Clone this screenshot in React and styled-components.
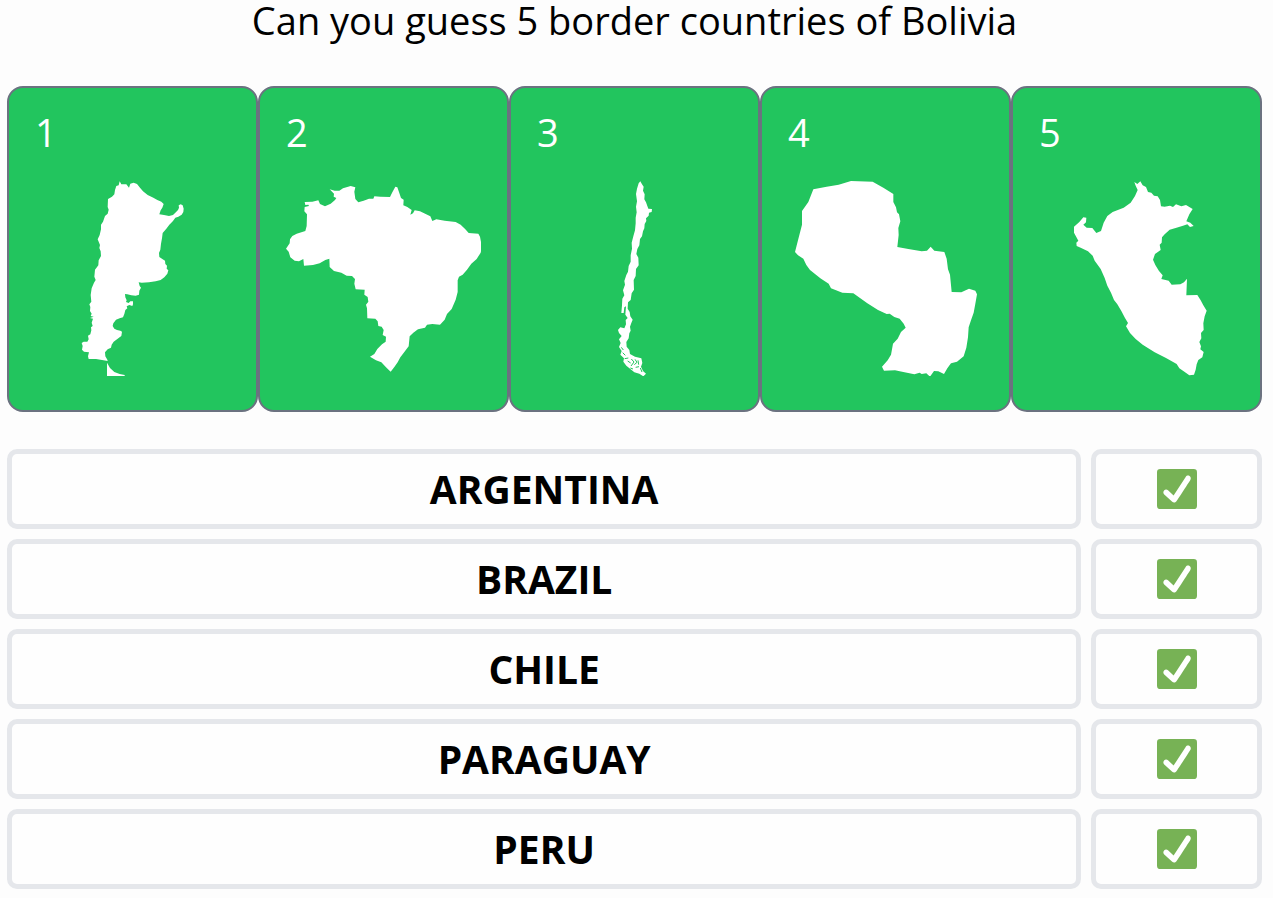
import React from 'react'
import styled, { createGlobalStyle } from 'styled-components'

const countries = [
    {
        name: 'ARGENTINA',
        viewBox: '105 303 585 585',
        path: 'M349 318L356 316L359 304L364 313L379 313L387 323L391 311L401 308L411 312L420 323L429 334L443 345L460 353L472 360L484 365L491 372L487 383L482 391L478 403L492 405L507 408L519 405L526 398L534 390L537 383L536 376L542 373L548 376L551 386L550 396L545 404L535 410L526 413L519 423L508 434L499 446L488 459L486 475L483 491L481 509L477 519L478 531L487 537L495 542L496 552L501 557L500 566L505 571L502 581L493 592L482 600L467 604L447 607L425 608L416 607L419 618L423 623L418 632L417 644L407 647L394 646L382 643L375 642L376 652L380 661L378 666L386 669L391 664L399 664L399 673L397 678L388 675L380 679L382 685L376 690L373 702L369 712L359 715L348 719L340 730L338 738L343 746L351 750L361 752L366 755L364 768L353 776L341 785L335 794L333 803L323 808L315 817L316 829L322 839L323 843L306 840L288 837L266 837L264 829L267 817L252 815L246 809L248 798L245 789L251 785L262 785L266 778L264 767L271 763L274 751L273 742L278 738L275 728L279 716L270 714L281 710L272 708L275 701L270 693L271 681L268 673L274 665L272 645L275 625L282 608L287 600L283 590L285 569L295 556L296 541L303 528L302 514L298 504L300 495L293 478L299 465L303 448L303 434L309 425L315 408L323 401L326 389L323 381L324 357L336 350L343 343L345 330ZM321 848L330 864L343 876L359 882L374 885L374 888L347 890L321 888Z'
    },
    {
        name: 'BRAZIL',
        viewBox: '93 303 585 585',
        path: 'M149 366L172 365L190 361L195 372L210 379L227 371L240 360L244 354L236 350L237 341L224 328L239 332L253 332L264 325L287 318L301 322L298 335L301 357L310 367L326 362L342 356L355 356L358 349L376 350L405 351L412 337L421 320L427 322L434 342L438 354L446 359L445 376L457 381L470 390L466 404L474 400L479 391L495 394L512 402L526 409L532 423L544 418L569 422L602 426L617 434L631 448L641 459L670 461L675 470L681 502L677 518L665 537L649 551L636 569L623 584L612 590L608 601L608 636L602 659L590 687L576 702L569 719L555 734L532 732L516 734L510 743L489 748L475 758L464 769L461 799L448 816L436 832L428 847L418 861L407 875L396 865L379 847L363 841L345 830L358 822L367 807L381 793L392 785L393 770L383 765L386 750L380 740L370 738L368 724L361 716L337 715L336 685L333 674L340 665L338 651L328 644L329 629L302 628L298 611L300 597L291 588L275 587L259 578L237 573L224 561L223 536L211 540L194 550L174 555L147 557L145 537L132 544L119 542L106 532L101 515L93 506L104 490L105 478L112 468L125 461L151 453L155 438L156 403L148 394L149 381L162 378L160 374L151 375Z'
    },
    {
        name: 'CHILE',
        viewBox: '-189 33 585 585',
        path: 'M116 40L121 34L126 43L131 50L129 62L134 73L133 88L138 97L145 116L156 117L155 126L147 128L146 137L138 145L139 153L134 162L133 175L129 184L126 199L120 207L118 226L112 237L109 252L115 263L116 286L108 297L107 318L101 330L102 359L95 370L92 390L84 397L83 416L89 426L91 439L98 449L94 459L90 470L92 482L88 490L86 505L79 516L80 530L88 540L90 552L105 560L124 565L127 579L123 590L129 603L138 611L130 619L118 611L103 607L91 597L79 587L70 575L72 565L61 554L65 543L57 531L62 519L57 508L65 498L57 489L54 480L61 472L73 475L78 463L77 450L83 444L76 434L78 409L73 412L71 429L64 429L66 406L67 386L73 376L69 361L75 344L73 333L79 315L84 305L86 288L92 275L92 256L96 236L95 218L100 199L105 181L107 160L107 143L110 127L108 110L111 94L108 72L111 56Z',
        channels: 'M64 532L70 540M68 548L76 556M74 566L85 564M83 573L92 579M94 567L102 576L93 588M105 568L111 577L103 584M114 571L116 584M107 592L117 590M91 594L99 597M121 594L126 606'
    },
    {
        name: 'PARAGUAY',
        viewBox: '84 303 585 585',
        path: 'M160 328L200 320L236 314L273 303L338 305L370 323L400 342L400 366L408 382L411 397L417 403L421 424L415 444L416 465L412 501L445 507L485 514L501 512L512 500L523 512L553 516L560 536L564 568L570 584L575 636L604 637L627 626L646 632L651 643L646 671L641 698L633 721L626 742L624 772L619 803L611 829L591 845L573 850L562 865L552 882L535 874L522 873L510 890L499 880L485 882L479 878L463 883L430 876L405 871L372 872L366 860L383 841L393 824L399 791L413 776L423 756L437 743L431 731L419 716L403 711L389 701L380 702L354 690L322 670L280 640L247 638L213 625L206 611L181 595L150 570L139 555L130 536L114 526L105 516L114 481L126 434L126 393L145 366Z'
    },
    {
        name: 'PERU',
        viewBox: '87 303 585 585',
        path: 'M373 306L382 312L391 304L398 316L408 321L414 336L424 338L432 347L443 349L450 360L453 379L464 380L480 377L489 381L498 373L514 379L528 375L548 387L538 403L529 424L541 428L551 438L540 441L532 433L519 437L497 444L479 449L464 463L456 472L455 488L449 494L452 510L435 522L429 539L436 555L447 573L458 586L454 597L476 602L485 614L511 613L522 607L531 596L529 646L562 645L572 661L580 676L590 692L584 709L580 730L581 750L573 759L574 775L568 786L573 799L571 808L581 816L577 832L565 840L560 853L557 869L552 884L538 886L521 874L508 865L500 852L468 834L434 817L398 794L377 777L360 759L348 739L354 729L345 714L334 693L322 673L312 660L303 638L292 617L284 594L272 567L254 542L248 527L234 514L212 503L200 498L199 488L205 482L192 458L192 440L208 426L220 412L229 413L228 427L220 434L230 443L247 444L259 459L273 453L281 428L292 408L308 396L341 383L362 368L375 348L383 330L377 317Z'
    }
]

const App = () => {
    return (
        <>
            <GlobalStyle />
            <Container>
                <Title>Can you guess 5 border countries of Bolivia</Title>
                <Cards>
                    {countries.map((country, index) => (
                        <Card key={country.name}>
                            <CardNumber>{index + 1}</CardNumber>
                            <CountryMap viewBox={country.viewBox} aria-hidden="true">
                                <path d={country.path} />
                                {country.channels && <path className="channels" d={country.channels} />}
                            </CountryMap>
                        </Card>
                    ))}
                </Cards>
                <Guesses>
                    {countries.map((country) => (
                        <Guess key={country.name}>
                            <GuessBox $span={6}>{country.name}</GuessBox>
                            <GuessBox $span={1}>
                                <CheckIcon />
                            </GuessBox>
                        </Guess>
                    ))}
                </Guesses>
            </Container>
        </>
    )
}

const CheckIcon = () => (
    <Check viewBox="0 0 36 36" aria-hidden="true">
        <rect width="36" height="36" rx="3" fill="#77b255" />
        <path
            fill="#fff"
            d="M29.28 6.362c-1.156-.751-2.704-.422-3.458.736L14.936 23.877l-5.029-4.65c-1.014-.938-2.596-.875-3.533.138-.937 1.014-.875 2.596.139 3.533l7.209 6.666c.48.445 1.09.665 1.696.665.673 0 1.534-.282 2.099-1.139.332-.506 12.5-19.27 12.5-19.27.751-1.159.421-2.707-.737-3.458z"
        />
    </Check>
)

export default App

const GlobalStyle = createGlobalStyle`
    *{
        box-sizing: border-box;
    }
    body{
        margin: 0;
        background-color: #fdfdfd;
        color: #000;
        font-family: "Segoe UI", "Open Sans", "Noto Sans", sans-serif;
        font-size: 38px;
        line-height: 40px;
    }
`

const Container = styled.main`
    padding: 0 11px 10px 7px;
`

const Title = styled.h1`
    margin: 0 0 46px;
    font-size: 38px;
    font-weight: 400;
    text-align: center;
`

const Cards = styled.div`
    display: grid;
    grid-template-columns: repeat(5, 1fr);
    margin-bottom: 37px;
`

const Card = styled.div`
    display: flex;
    flex-direction: column;
    gap: 29px;
    padding: 24px 26px 34px;
    border: 2px solid #6b7280;
    border-radius: 16px;
    background-color: #22c55e;
    color: #fff;
`

const CardNumber = styled.span`
    font-size: 38px;
`

const CountryMap = styled.svg`
    display: block;
    width: 100%;
    fill: #fff;
    .channels{
        fill: none;
        stroke: #22c55e;
        stroke-width: 3;
    }
`

const Guesses = styled.div`
    display: flex;
    flex-direction: column;
    gap: 10px;
`

const Guess = styled.div`
    display: grid;
    grid-template-columns: repeat(7, 1fr);
    gap: 10px;
`

const GuessBox = styled.div`
    grid-column: span ${(props) => props.$span};
    display: flex;
    justify-content: center;
    align-items: center;
    padding: 15px;
    border: 5px solid #e5e7eb;
    border-radius: 10px;
    background-color: #fefefe;
    font-size: 39px;
    font-weight: 700;
`

const Check = styled.svg`
    display: block;
    width: 40px;
    height: 40px;
`
